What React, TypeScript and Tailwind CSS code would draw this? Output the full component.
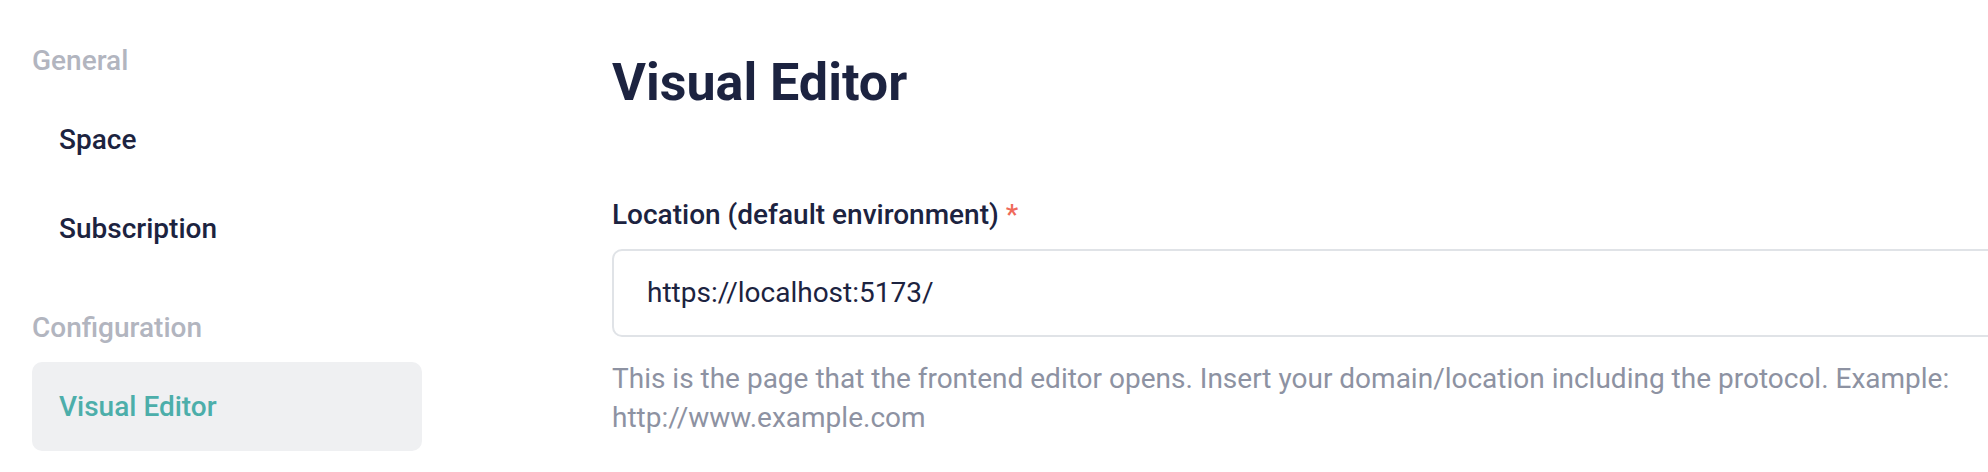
import React from "react";

export default function App() {
  return (
    <div
      className="w-[1988px] h-[472px] overflow-hidden bg-white flex"
      style={{ fontFamily: "Roboto, 'Noto Sans', sans-serif" }}
    >
      <aside className="w-[612px] shrink-0 pl-[32px] pt-[41px]">
        <div className="w-[390px]">
          <div className="h-[40px] leading-[40px] text-[28px] font-medium text-[#b2b5bf] mb-[14px]">
            General
          </div>
          <div className="h-[89px] flex items-center pl-[27px] text-[28px] font-medium text-[#1c2340]">
            Space
          </div>
          <div className="h-[89px] flex items-center pl-[27px] text-[28px] font-medium text-[#1c2340]">
            Subscription
          </div>
          <div className="h-[40px] leading-[40px] text-[28px] font-medium text-[#b2b5bf] mt-[35px] mb-[14px]">
            Configuration
          </div>
          <div className="h-[89px] flex items-center pl-[27px] rounded-[10px] bg-[#eff0f2] text-[28px] font-medium text-[#4caeaa]">
            Visual Editor
          </div>
        </div>
      </aside>
      <main className="w-[1400px] shrink-0 pt-[57px]">
        <h1 className="text-[52px] leading-[52px] font-bold text-[#1c2340]">Visual Editor</h1>
        <div className="mt-[91px] text-[28px] leading-[30px] font-medium text-[#1c2340]">
          Location (default environment) <span className="text-[#ef6a5a]">*</span>
        </div>
        <div className="mt-[19px] h-[88px] border-2 border-[#e0e3e7] rounded-[10px] flex items-center pl-[33px] text-[28px] text-[#1c2340]">
          https://localhost:5173/
        </div>
        <p className="mt-[22px] text-[28px] leading-[39px] text-[#8d92a2]">
          This is the page that the frontend editor opens. Insert your domain/location including the protocol. Example: http://www.example.com
        </p>
      </main>
    </div>
  );
}
